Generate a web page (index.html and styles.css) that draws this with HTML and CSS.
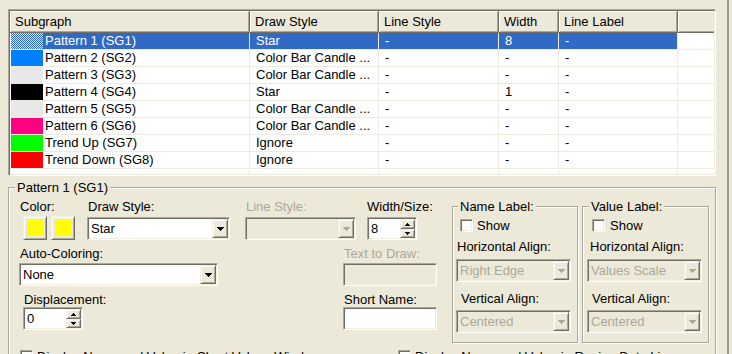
FILE: index.html
```html
<!DOCTYPE html>
<html>
<head>
<meta charset="utf-8">
<link rel="stylesheet" href="styles.css">
</head>
<body>
<div class="frame">
  <div class="lv sunk">
    <div class="lv-row lv-head">
      <div class="hc">Subgraph</div>
      <div class="hc">Draw Style</div>
      <div class="hc">Line Style</div>
      <div class="hc">Width</div>
      <div class="hc">Line Label</div>
      <div class="hc"></div>
    </div>
    <div class="lv-row item sel">
      <div class="c first"><span class="sw sw-pat"></span><span class="t">Pattern 1 (SG1)</span></div>
      <div class="c">Star</div><div class="c">-</div><div class="c">8</div><div class="c">-</div><div class="c last"></div>
    </div>
    <div class="lv-row item">
      <div class="c first"><span class="sw sw-blue"></span><span class="t">Pattern 2 (SG2)</span></div>
      <div class="c">Color Bar Candle ...</div><div class="c">-</div><div class="c">-</div><div class="c">-</div><div class="c last"></div>
    </div>
    <div class="lv-row item">
      <div class="c first"><span class="sw sw-grey"></span><span class="t">Pattern 3 (SG3)</span></div>
      <div class="c">Color Bar Candle ...</div><div class="c">-</div><div class="c">-</div><div class="c">-</div><div class="c last"></div>
    </div>
    <div class="lv-row item">
      <div class="c first"><span class="sw sw-black"></span><span class="t">Pattern 4 (SG4)</span></div>
      <div class="c">Star</div><div class="c">-</div><div class="c">1</div><div class="c">-</div><div class="c last"></div>
    </div>
    <div class="lv-row item">
      <div class="c first"><span class="sw sw-grey"></span><span class="t">Pattern 5 (SG5)</span></div>
      <div class="c">Color Bar Candle ...</div><div class="c">-</div><div class="c">-</div><div class="c">-</div><div class="c last"></div>
    </div>
    <div class="lv-row item">
      <div class="c first"><span class="sw sw-pink"></span><span class="t">Pattern 6 (SG6)</span></div>
      <div class="c">Color Bar Candle ...</div><div class="c">-</div><div class="c">-</div><div class="c">-</div><div class="c last"></div>
    </div>
    <div class="lv-row item">
      <div class="c first"><span class="sw sw-green"></span><span class="t">Trend Up (SG7)</span></div>
      <div class="c">Ignore</div><div class="c">-</div><div class="c">-</div><div class="c">-</div><div class="c last"></div>
    </div>
    <div class="lv-row item">
      <div class="c first"><span class="sw sw-red"></span><span class="t">Trend Down (SG8)</span></div>
      <div class="c">Ignore</div><div class="c">-</div><div class="c">-</div><div class="c">-</div><div class="c last"></div>
    </div>
    <div class="lv-row item">
      <div class="c first"></div><div class="c"></div><div class="c"></div><div class="c"></div><div class="c"></div><div class="c last"></div>
    </div>
  </div>

  <fieldset class="grp main">
    <legend>Pattern 1 (SG1)</legend>
    <div class="top">
      <div class="left">
        <div class="frow r1">
          <div class="fld f-color">
            <div class="lbl">Color:</div>
            <div class="cbtns">
              <div class="cbtn btn"><span class="fill"></span></div>
              <div class="cbtn btn"><span class="fill"></span></div>
            </div>
          </div>
          <div class="fld f-draw">
            <div class="lbl">Draw Style:</div>
            <div class="combo sunk"><span class="val">Star</span><span class="dd btn"><svg width="7" height="4" viewBox="0 0 7 4"><path d="M0 0h7v1H0zM1 1h5v1H1zM2 2h3v1H2zM3 3h1v1H3z" fill="#000"/></svg></span></div>
          </div>
          <div class="fld f-line">
            <div class="lbl dis">Line Style:</div>
            <div class="combo sunk dis"><span class="val"></span><span class="dd btn"><svg width="7" height="4" viewBox="0 0 7 4"><path d="M0 0h7v1H0zM1 1h5v1H1zM2 2h3v1H2zM3 3h1v1H3z" fill="#ACA899"/></svg></span></div>
          </div>
          <div class="fld f-width">
            <div class="lbl lbl0">Width/Size:</div>
            <div class="spin sunk"><span class="val">8</span><span class="arrows"><span class="sb sb-up btn"><svg width="5" height="3" viewBox="0 0 5 3"><path d="M2 0h1v1H2zM1 1h3v1H1zM0 2h5v1H0z" fill="#000"/></svg></span><span class="sb sb-dn btn"><svg width="5" height="3" viewBox="0 0 5 3"><path d="M0 0h5v1H0zM1 1h3v1H1zM2 2h1v1H2z" fill="#000"/></svg></span></span></div>
          </div>
        </div>
        <div class="frow r2">
          <div class="fld f-auto">
            <div class="lbl">Auto-Coloring:</div>
            <div class="combo sunk"><span class="val">None</span><span class="dd btn"><svg width="7" height="4" viewBox="0 0 7 4"><path d="M0 0h7v1H0zM1 1h5v1H1zM2 2h3v1H2zM3 3h1v1H3z" fill="#000"/></svg></span></div>
          </div>
          <div class="fld f-text">
            <div class="lbl dis">Text to Draw:</div>
            <div class="edit sunk dis"></div>
          </div>
        </div>
        <div class="frow r3">
          <div class="fld f-disp">
            <div class="lbl">Displacement:</div>
            <div class="spin sunk"><span class="val">0</span><span class="arrows"><span class="sb sb-up btn"><svg width="5" height="3" viewBox="0 0 5 3"><path d="M2 0h1v1H2zM1 1h3v1H1zM0 2h5v1H0z" fill="#000"/></svg></span><span class="sb sb-dn btn"><svg width="5" height="3" viewBox="0 0 5 3"><path d="M0 0h5v1H0zM1 1h3v1H1zM2 2h1v1H2z" fill="#000"/></svg></span></span></div>
          </div>
          <div class="fld f-short">
            <div class="lbl">Short Name:</div>
            <div class="edit sunk"></div>
          </div>
        </div>
      </div>

      <div class="labels">
        <fieldset class="grp lg lg-name">
          <legend>Name Label:</legend>
          <div class="chkrow"><span class="cb sunk"></span><span>Show</span></div>
          <div class="lbl l-h">Horizontal Align:</div>
          <div class="combo sunk dis c-h"><span class="val">Right Edge</span><span class="dd btn"><svg width="7" height="4" viewBox="0 0 7 4"><path d="M0 0h7v1H0zM1 1h5v1H1zM2 2h3v1H2zM3 3h1v1H3z" fill="#ACA899"/></svg></span></div>
          <div class="lbl l-v">Vertical Align:</div>
          <div class="combo sunk dis c-v"><span class="val">Centered</span><span class="dd btn"><svg width="7" height="4" viewBox="0 0 7 4"><path d="M0 0h7v1H0zM1 1h5v1H1zM2 2h3v1H2zM3 3h1v1H3z" fill="#ACA899"/></svg></span></div>
        </fieldset>
        <fieldset class="grp lg lg-value">
          <legend>Value Label:</legend>
          <div class="chkrow"><span class="cb sunk"></span><span>Show</span></div>
          <div class="lbl l-h">Horizontal Align:</div>
          <div class="combo sunk dis c-h"><span class="val">Values Scale</span><span class="dd btn"><svg width="7" height="4" viewBox="0 0 7 4"><path d="M0 0h7v1H0zM1 1h5v1H1zM2 2h3v1H2zM3 3h1v1H3z" fill="#ACA899"/></svg></span></div>
          <div class="lbl l-v">Vertical Align:</div>
          <div class="combo sunk dis c-v"><span class="val">Centered</span><span class="dd btn"><svg width="7" height="4" viewBox="0 0 7 4"><path d="M0 0h7v1H0zM1 1h5v1H1zM2 2h3v1H2zM3 3h1v1H3z" fill="#ACA899"/></svg></span></div>
        </fieldset>
      </div>
    </div>
    <div class="checks">
      <div class="chk chk1"><span class="cb sunk"></span><span>Display Name and Value in Chart Values Window</span></div>
      <div class="chk"><span class="cb sunk"></span><span>Display Name and Value in Region Data Line</span></div>
    </div>
  </fieldset>
</div>
</body>
</html>
```

FILE: styles.css
```css
* { box-sizing: border-box; }
html, body {
  margin: 0;
  padding: 0;
  width: 732px;
  height: 354px;
  overflow: hidden;
  background: #ECE9D8;
}
body {
  font: 13px/15px "Liberation Sans", Arial, sans-serif;
  color: #000;
}
.frame {
  width: 729px;
  height: 354px;
  padding: 9px 0 0 8px;
  border-right: 2px solid #9D9B8E;
  overflow: hidden;
}

/* generic 3D boxes */
.sunk {
  border: 1px solid;
  border-color: #ACA899 #FFFFFF #FFFFFF #ACA899;
  box-shadow: inset 1px 1px 0 #716F64, inset -1px -1px 0 #F1EFE2;
  padding: 1px;
}
.btn {
  background: #ECE9D8;
  border: 1px solid;
  border-color: #F1EFE2 #716F64 #716F64 #F1EFE2;
  box-shadow: inset 1px 1px 0 #FFFFFF, inset -1px -1px 0 #ACA899;
}

/* list view */
.lv {
  width: 708px;
  height: 167px;
  background: #fff;
  overflow: hidden;
}
.lv-row {
  display: grid;
  grid-template-columns: 240px 129px 120px 60px 119px 36px;
}
.lv-head { height: 22px; }
.hc {
  background: #ECE9D8;
  border-right: 1px solid #716F64;
  border-bottom: 1px solid #716F64;
  box-shadow: inset 1px 1px 0 #FFFFFF, inset -1px -1px 0 #ACA899;
  padding-left: 5px;
  line-height: 21px;
  white-space: nowrap;
  overflow: hidden;
}
.hc:last-child { border-right: none; box-shadow: inset 1px 1px 0 #FFFFFF, inset 0 -1px 0 #ACA899; }
.item { height: 17px; }
.c {
  border-right: 1px solid #EDEBE0;
  border-bottom: 1px solid #EDEBE0;
  padding-left: 6px;
  line-height: 16px;
  white-space: nowrap;
  overflow: hidden;
}
.c.last { border-right: none; }
.c.first {
  display: flex;
  padding-left: 1px;
}
.sw { width: 32px; height: 16px; flex: none; }
.c.first .t { flex: 1; padding-left: 2px; }
.sel .c:not(.first):not(.last), .sel .c.first .t {
  background: #316AC5;
  color: #fff;
}
.sw-pat { background: repeating-conic-gradient(#FFFF00 0 25%, #316AC5 0 50%) 0 0 / 2px 2px; }
.sw-blue { background: #0080FF; }
.sw-grey { background: #E8E8E8; }
.sw-black { background: #000; }
.sw-pink { background: #FF0080; }
.sw-green { background: #00FF00; }
.sw-red { background: #FF0000; }

/* group boxes */
.grp {
  margin: 0;
  padding: 0;
  border: 1px solid #ACA899;
  box-shadow: inset 1px 1px 0 #FFFFFF, 1px 1px 0 #FFFFFF;
  min-width: 0;
}
.grp legend {
  padding: 0 2px;
  line-height: 15px;
  background: #ECE9D8;
}
.main {
  width: 708px;
  margin-top: 4px;
  padding-top: 4px;
}
.main > legend { margin-left: 6px; }

.top { display: flex; align-items: flex-start; }
.left { width: 443px; flex: none; }
.frow { display: flex; align-items: flex-start; }
.fld { display: flex; flex-direction: column; flex: none; }
.lbl { padding-left: 1px; height: 15px; white-space: nowrap; }
.lbl0 { padding-left: 0; }
.dis { color: #ACA899; }

.r2, .r3 { margin-top: 6px; }
.f-color { margin-left: 10px; width: 56px; }
.f-draw { margin-left: 12px; width: 143px; }
.f-line { margin-left: 15px; width: 111px; }
.f-width { margin-left: 11px; width: 50px; }
.f-auto { margin-left: 10px; width: 199px; }
.f-text { margin-left: 125px; width: 94px; }
.f-disp { margin-left: 14px; width: 60px; }
.f-short { margin-left: 260px; width: 94px; }

.cbtns { display: flex; gap: 4px; margin: 2px 0 0 4px; }
.cbtn {
  width: 24px;
  height: 24px;
  display: flex;
  align-items: center;
  justify-content: center;
}
.cbtn .fill { width: 16px; height: 16px; background: #FFFF00; }

.combo, .spin, .edit {
  height: 23px;
  background: #fff;
  margin-top: 3px;
}
.r2 .combo, .r2 .edit { margin-top: 2px; }
.r3 .spin, .r3 .edit { margin-top: 0; }
.combo, .spin { display: flex; }
.combo.dis, .edit.dis { background: #ECE9D8; }
.val {
  flex: 1;
  padding-left: 2px;
  line-height: 19px;
  white-space: nowrap;
  overflow: hidden;
}
.dd {
  width: 16px;
  flex: none;
  display: flex;
  align-items: center;
  justify-content: center;
}
.dd svg, .sb svg { display: block; }
.arrows { width: 15px; flex: none; display: flex; flex-direction: column; }
.sb { display: flex; align-items: center; justify-content: center; }
.sb-up { height: 10px; }
.sb-dn { height: 9px; }

.cb { width: 13px; height: 13px; background: #fff; flex: none; display: block; }

/* label groups */
.labels { display: flex; gap: 4px; }
.lg { padding-top: 4px; padding-bottom: 9px; }
.lg-name { width: 126px; }
.lg-value { width: 127px; }
.lg-name legend { margin-left: 5px; }
.lg-value legend { margin-left: 6px; }
.chkrow { display: flex; align-items: center; height: 15px; }
.lg-name .chkrow { margin-left: 7px; gap: 4px; }
.lg-value .chkrow { margin-left: 9px; gap: 5px; }
.lg .combo { width: 115px; }
.l-h { margin-top: 6px; }
.c-h { margin-top: 5px; }
.l-v { margin-top: 9px; }
.c-v { margin-top: 4px; }
.lg-name .l-h { padding-left: 4px; }
.lg-name .l-v { padding-left: 8px; }
.lg-name .combo { margin-left: 3px; }
.lg-value .l-h { padding-left: 7px; }
.lg-value .l-v { padding-left: 9px; }
.lg-value .combo { margin-left: 4px; }

.checks { display: flex; margin-top: 6px; }
.chk { display: flex; align-items: center; gap: 4px; white-space: nowrap; }
.chk1 { margin-left: 11px; width: 378px; }
```
